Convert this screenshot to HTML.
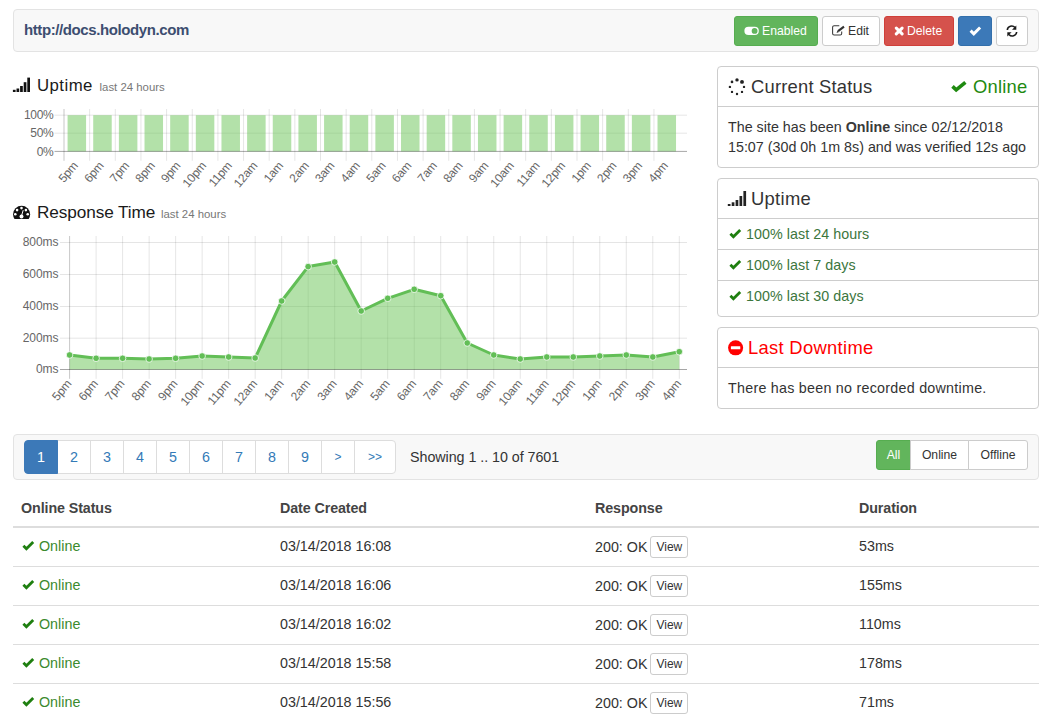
<!DOCTYPE html>
<html><head><meta charset="utf-8">
<style>
*{box-sizing:border-box;margin:0;padding:0}
html,body{width:1050px;height:722px;overflow:hidden;background:#fff}
body{font-family:"Liberation Sans",sans-serif;font-size:14.3px;color:#333;position:relative}
.abs{position:absolute}
svg{display:block}
.well{position:absolute;background:#f8f8f8;border:1px solid #e3e3e3;border-radius:4px}
.btn{position:absolute;top:16px;height:30px;border:1px solid;border-radius:3px;font-size:12.2px;line-height:28px;white-space:nowrap}
.btn svg,.btn span{position:absolute}
.btn span{top:0}
.panel{position:absolute;left:717px;width:322px;border:1px solid #cdcdcd;border-radius:4px;background:#fff}
.ph{position:relative;height:40px;border-bottom:1px solid #cdcdcd;font-size:18.4px;color:#333}
.ph span.t{position:absolute;top:9px;line-height:22px;white-space:nowrap}
.ph svg{position:absolute}
.li{position:relative;height:31px;border-bottom:1px solid #cdcdcd;color:#3c763d}
.li:last-child{border-bottom:none}
.li span{position:absolute;left:28px;top:6px;line-height:18px;white-space:nowrap;letter-spacing:0.05px}
.li svg{position:absolute;left:11px;top:10px}
.pg{position:absolute;top:440px;height:34px;border:1px solid #ddd;color:#337ab7;font-size:14.3px;line-height:32px;text-align:center;background:#fff}
.row{position:absolute;left:13px;width:1026px;height:39px;border-top:1px solid #ddd}
.row div{position:absolute;top:9px;line-height:18px;color:#333;white-space:nowrap}
.row svg{position:absolute;left:9px;top:13px}
.view{display:inline-block;position:relative;top:-1px;margin-left:3px;height:22px;padding:0 5px;border:1px solid #ccc;border-radius:3px;font-size:12px;line-height:20px;background:#fff;color:#333}
th{font-weight:700}
</style></head><body>
<div class="well" style="left:13px;top:9px;width:1026px;height:43px"></div>
<div class="abs" style="left:24px;top:20px;font-size:15px;font-weight:700;color:#3d4e70;line-height:20px;letter-spacing:-0.4px">http://docs.holodyn.com</div>
<div class="btn" style="left:734px;width:84px;background:#62b55c;border-color:#56ad50;color:#fff">
  <svg width="16" height="10" viewBox="0 0 16 10" style="left:9px;top:9px"><rect x="0.4" y="0.8" width="14.4" height="8.2" rx="4.1" fill="#fff"/><circle cx="10.6" cy="4.9" r="2.9" fill="#62b55c"/></svg>
  <span style="left:27px">Enabled</span></div>
<div class="btn" style="left:822px;width:58px;background:#fff;border-color:#ccc;color:#333">
  <svg width="16" height="14" viewBox="0 0 16 14" style="left:8px;top:7px"><path d="M8.3 1.7H3.1a1.5 1.5 0 0 0-1.5 1.5v6.3a1.5 1.5 0 0 0 1.5 1.5h6.1a1.5 1.5 0 0 0 1.5-1.5V7.6" fill="none" stroke="#3a3a3a" stroke-width="1.05"/><path d="M7.1 7.2L13 2.6" stroke="#333" stroke-width="2.1"/><path d="M5.6 8.9l.8-2.4 1.6 1.6z" fill="#333"/></svg>
  <span style="left:25px">Edit</span></div>
<div class="btn" style="left:884px;width:70px;background:#d5524c;border-color:#cf3f39;color:#fff">
  <svg width="12" height="11" viewBox="0 0 12 11" style="left:9px;top:9px"><path d="M2.3 2.1L8.1 7.9M8.1 2.1L2.3 7.9" stroke="#fff" stroke-width="3" stroke-linecap="round"/></svg>
  <span style="left:22px">Delete</span></div>
<div class="btn" style="left:958px;width:34px;background:#3c79b8;border-color:#336fab;color:#fff">
  <svg width="14" height="11" viewBox="0 0 14 11" style="left:10px;top:9px"><path d="M1.6 4.6l3.2 3.2 6.3-6.3" fill="none" stroke="#fff" stroke-width="3"/></svg></div>
<div class="btn" style="left:996px;width:32px;background:#fff;border-color:#ccc;color:#333">
  <svg width="12" height="12" viewBox="0 0 12 12" style="left:9px;top:7.8px"><path d="M1.3 5A4.4 4.4 0 0 1 9 2.6" fill="none" stroke="#1a1a1a" stroke-width="1.6"/><path d="M10.3 0.4v4.4H6z" fill="#1a1a1a"/><path d="M10.7 7A4.4 4.4 0 0 1 3 9.4" fill="none" stroke="#1a1a1a" stroke-width="1.6"/><path d="M1.3 11.6V7.2h4.3z" fill="#1a1a1a"/></svg></div>

<div class="panel" style="top:66px;height:102px">
  <div class="ph"><svg width="20" height="20" viewBox="0 0 20 20" style="left:9px;top:9.8px"><g fill="#222"><circle cx="10" cy="2.9" r="1.7"/><circle cx="15" cy="4.9" r="1.95"/><circle cx="17" cy="9.9" r="1.2"/><circle cx="15" cy="14.9" r="1.2"/><circle cx="10" cy="17" r="1.2"/><circle cx="5" cy="14.9" r="1.2"/><circle cx="2.9" cy="9.9" r="1.2"/><circle cx="5" cy="4.9" r="1.35"/></g></svg>
    <span class="t" style="left:33px;letter-spacing:0.2px">Current Status</span>
    <svg width="18" height="14" viewBox="0 0 18 14" style="left:232px;top:13px"><path d="M2.5 6.4L6.2 9.9L15.4 2.3" fill="none" stroke="#1f8a10" stroke-width="3.6"/></svg>
    <span class="t" style="left:255px;color:#1f8a10;letter-spacing:0.2px">Online</span>
  </div>
  <div class="abs" style="left:10px;top:50px;line-height:20px;width:312px;white-space:nowrap">The site has been <b style="color:#3a3a3a">Online</b> since 02/12/2018<br>15:07 (30d 0h 1m 8s) and was verified 12s ago</div>
</div>
<div class="panel" style="top:178px;height:139px">
  <div class="ph">
    <svg width="26" height="18" viewBox="722 190 26 18" style="left:4px;top:11px;width:26px;height:18px"><g fill="#222"><rect x="727.80" y="204.00" width="2.7" height="2"/><rect x="731.70" y="202.30" width="2.7" height="3.7"/><rect x="735.60" y="200.00" width="2.7" height="6"/><rect x="739.50" y="196.00" width="2.7" height="10"/><rect x="743.40" y="191.00" width="2.7" height="15"/></g></svg>
    <span class="t" style="left:33px;letter-spacing:0.3px">Uptime</span>
  </div>
  <div class="li"><svg width="13" height="11" viewBox="0 0 13 11"><path d="M1.4 4.8L4.4 7.8L11.2 1" fill="none" stroke="#1f7f10" stroke-width="2.8"/></svg><span>100% last 24 hours</span></div>
  <div class="li"><svg width="13" height="11" viewBox="0 0 13 11"><path d="M1.4 4.8L4.4 7.8L11.2 1" fill="none" stroke="#1f7f10" stroke-width="2.8"/></svg><span>100% last 7 days</span></div>
  <div class="li"><svg width="13" height="11" viewBox="0 0 13 11"><path d="M1.4 4.8L4.4 7.8L11.2 1" fill="none" stroke="#1f7f10" stroke-width="2.8"/></svg><span>100% last 30 days</span></div>
</div>
<div class="panel" style="top:327px;height:82px">
  <div class="ph">
    <svg width="17" height="17" viewBox="0 0 17 17" style="left:10px;top:12px"><circle cx="7.6" cy="7.8" r="7.55" fill="#f00"/><rect x="2.9" y="6.3" width="9.4" height="3" rx=".4" fill="#fff"/></svg>
    <span class="t" style="left:30px;color:#f00;letter-spacing:0.3px">Last Downtime</span>
  </div>
  <div class="abs" style="left:10px;top:50px;line-height:20px;white-space:nowrap;letter-spacing:0.25px">There has been no recorded downtime.</div>
</div>

<svg class="abs" style="left:10px;top:75px" width="24" height="20" viewBox="10 75 24 20"><g fill="#111"><rect x="12.90" y="89.80" width="2.7" height="2.2"/><rect x="16.50" y="88.50" width="2.7" height="3.5"/><rect x="20.10" y="86.00" width="2.7" height="6"/><rect x="23.70" y="82.20" width="2.7" height="9.8"/><rect x="27.30" y="77.60" width="2.7" height="14.4"/></g></svg>
<div class="abs" style="left:37px;top:75px;font-size:16.8px;line-height:22px;color:#1a1a1a;white-space:nowrap"><span style="letter-spacing:0.45px">Uptime</span> <span style="font-size:11.4px;color:#777;margin-left:2px">last 24 hours</span></div>
<svg class="abs" style="left:10px;top:200px" width="24" height="24" viewBox="10 200 24 24"><defs><clipPath id="cl"><rect x="10" y="200" width="24" height="19"/></clipPath></defs><circle cx="21.6" cy="214.3" r="8.5" fill="#111" clip-path="url(#cl)"/><g fill="#fff"><circle cx="17.1" cy="210.1" r="1.3"/><circle cx="21.5" cy="208.1" r="1.3"/><circle cx="25.9" cy="210.1" r="1.3"/><circle cx="15.3" cy="214.3" r="1.3"/><circle cx="27.7" cy="214.3" r="1.3"/><circle cx="21.5" cy="216.4" r="2"/></g><path d="M21.5 216l1.7-5.8" stroke="#fff" stroke-width="1"/></svg>
<div class="abs" style="left:37px;top:201px;font-size:17.2px;line-height:22px;color:#1a1a1a;white-space:nowrap"><span style="letter-spacing:-0.1px">Response Time</span> <span style="font-size:11.4px;color:#777;margin-left:1px">last 24 hours</span></div>

<svg class="abs" style="left:0;top:100px" width="700" height="95" viewBox="0 100 700 95" font-family="Liberation Sans">
<line x1="54.5" y1="115.2" x2="687" y2="115.2" stroke="rgba(0,0,0,0.1)"/>
<line x1="54.5" y1="133.2" x2="687" y2="133.2" stroke="rgba(0,0,0,0.1)"/>
<line x1="89.65" y1="109" x2="89.65" y2="160.8" stroke="rgba(0,0,0,0.1)"/>
<line x1="115.30" y1="109" x2="115.30" y2="160.8" stroke="rgba(0,0,0,0.1)"/>
<line x1="140.95" y1="109" x2="140.95" y2="160.8" stroke="rgba(0,0,0,0.1)"/>
<line x1="166.60" y1="109" x2="166.60" y2="160.8" stroke="rgba(0,0,0,0.1)"/>
<line x1="192.25" y1="109" x2="192.25" y2="160.8" stroke="rgba(0,0,0,0.1)"/>
<line x1="217.90" y1="109" x2="217.90" y2="160.8" stroke="rgba(0,0,0,0.1)"/>
<line x1="243.55" y1="109" x2="243.55" y2="160.8" stroke="rgba(0,0,0,0.1)"/>
<line x1="269.20" y1="109" x2="269.20" y2="160.8" stroke="rgba(0,0,0,0.1)"/>
<line x1="294.85" y1="109" x2="294.85" y2="160.8" stroke="rgba(0,0,0,0.1)"/>
<line x1="320.50" y1="109" x2="320.50" y2="160.8" stroke="rgba(0,0,0,0.1)"/>
<line x1="346.15" y1="109" x2="346.15" y2="160.8" stroke="rgba(0,0,0,0.1)"/>
<line x1="371.80" y1="109" x2="371.80" y2="160.8" stroke="rgba(0,0,0,0.1)"/>
<line x1="397.45" y1="109" x2="397.45" y2="160.8" stroke="rgba(0,0,0,0.1)"/>
<line x1="423.10" y1="109" x2="423.10" y2="160.8" stroke="rgba(0,0,0,0.1)"/>
<line x1="448.75" y1="109" x2="448.75" y2="160.8" stroke="rgba(0,0,0,0.1)"/>
<line x1="474.40" y1="109" x2="474.40" y2="160.8" stroke="rgba(0,0,0,0.1)"/>
<line x1="500.05" y1="109" x2="500.05" y2="160.8" stroke="rgba(0,0,0,0.1)"/>
<line x1="525.70" y1="109" x2="525.70" y2="160.8" stroke="rgba(0,0,0,0.1)"/>
<line x1="551.35" y1="109" x2="551.35" y2="160.8" stroke="rgba(0,0,0,0.1)"/>
<line x1="577.00" y1="109" x2="577.00" y2="160.8" stroke="rgba(0,0,0,0.1)"/>
<line x1="602.65" y1="109" x2="602.65" y2="160.8" stroke="rgba(0,0,0,0.1)"/>
<line x1="628.30" y1="109" x2="628.30" y2="160.8" stroke="rgba(0,0,0,0.1)"/>
<line x1="653.95" y1="109" x2="653.95" y2="160.8" stroke="rgba(0,0,0,0.1)"/>
<rect x="67.58" y="115.2" width="18.5" height="36.2" fill="rgba(104,196,84,0.5)"/>
<rect x="93.22" y="115.2" width="18.5" height="36.2" fill="rgba(104,196,84,0.5)"/>
<rect x="118.88" y="115.2" width="18.5" height="36.2" fill="rgba(104,196,84,0.5)"/>
<rect x="144.52" y="115.2" width="18.5" height="36.2" fill="rgba(104,196,84,0.5)"/>
<rect x="170.18" y="115.2" width="18.5" height="36.2" fill="rgba(104,196,84,0.5)"/>
<rect x="195.82" y="115.2" width="18.5" height="36.2" fill="rgba(104,196,84,0.5)"/>
<rect x="221.47" y="115.2" width="18.5" height="36.2" fill="rgba(104,196,84,0.5)"/>
<rect x="247.12" y="115.2" width="18.5" height="36.2" fill="rgba(104,196,84,0.5)"/>
<rect x="272.77" y="115.2" width="18.5" height="36.2" fill="rgba(104,196,84,0.5)"/>
<rect x="298.42" y="115.2" width="18.5" height="36.2" fill="rgba(104,196,84,0.5)"/>
<rect x="324.07" y="115.2" width="18.5" height="36.2" fill="rgba(104,196,84,0.5)"/>
<rect x="349.72" y="115.2" width="18.5" height="36.2" fill="rgba(104,196,84,0.5)"/>
<rect x="375.38" y="115.2" width="18.5" height="36.2" fill="rgba(104,196,84,0.5)"/>
<rect x="401.02" y="115.2" width="18.5" height="36.2" fill="rgba(104,196,84,0.5)"/>
<rect x="426.67" y="115.2" width="18.5" height="36.2" fill="rgba(104,196,84,0.5)"/>
<rect x="452.32" y="115.2" width="18.5" height="36.2" fill="rgba(104,196,84,0.5)"/>
<rect x="477.97" y="115.2" width="18.5" height="36.2" fill="rgba(104,196,84,0.5)"/>
<rect x="503.62" y="115.2" width="18.5" height="36.2" fill="rgba(104,196,84,0.5)"/>
<rect x="529.27" y="115.2" width="18.5" height="36.2" fill="rgba(104,196,84,0.5)"/>
<rect x="554.92" y="115.2" width="18.5" height="36.2" fill="rgba(104,196,84,0.5)"/>
<rect x="580.57" y="115.2" width="18.5" height="36.2" fill="rgba(104,196,84,0.5)"/>
<rect x="606.23" y="115.2" width="18.5" height="36.2" fill="rgba(104,196,84,0.5)"/>
<rect x="631.88" y="115.2" width="18.5" height="36.2" fill="rgba(104,196,84,0.5)"/>
<rect x="657.52" y="115.2" width="18.5" height="36.2" fill="rgba(104,196,84,0.5)"/>
<line x1="64.0" y1="109" x2="64.0" y2="160.8" stroke="rgba(0,0,0,0.22)"/>
<line x1="54.5" y1="151.4" x2="687" y2="151.4" stroke="rgba(0,0,0,0.35)"/>
<text x="53.3" y="119.3" text-anchor="end" font-size="12" letter-spacing="-0.35" fill="#666">100%</text>
<text x="53.3" y="137.3" text-anchor="end" font-size="12" letter-spacing="-0.35" fill="#666">50%</text>
<text x="53.3" y="155.5" text-anchor="end" font-size="12" letter-spacing="-0.35" fill="#666">0%</text>
<text transform="translate(75.5,163.3) rotate(-50)" text-anchor="end" font-size="12" letter-spacing="-0.2" fill="#666" dy="4">5pm</text>
<text transform="translate(101.2,163.3) rotate(-50)" text-anchor="end" font-size="12" letter-spacing="-0.2" fill="#666" dy="4">6pm</text>
<text transform="translate(126.8,163.3) rotate(-50)" text-anchor="end" font-size="12" letter-spacing="-0.2" fill="#666" dy="4">7pm</text>
<text transform="translate(152.4,163.3) rotate(-50)" text-anchor="end" font-size="12" letter-spacing="-0.2" fill="#666" dy="4">8pm</text>
<text transform="translate(178.1,163.3) rotate(-50)" text-anchor="end" font-size="12" letter-spacing="-0.2" fill="#666" dy="4">9pm</text>
<text transform="translate(203.8,163.3) rotate(-50)" text-anchor="end" font-size="12" letter-spacing="-0.2" fill="#666" dy="4">10pm</text>
<text transform="translate(229.4,163.3) rotate(-50)" text-anchor="end" font-size="12" letter-spacing="-0.2" fill="#666" dy="4">11pm</text>
<text transform="translate(255.0,163.3) rotate(-50)" text-anchor="end" font-size="12" letter-spacing="-0.2" fill="#666" dy="4">12am</text>
<text transform="translate(280.7,163.3) rotate(-50)" text-anchor="end" font-size="12" letter-spacing="-0.2" fill="#666" dy="4">1am</text>
<text transform="translate(306.4,163.3) rotate(-50)" text-anchor="end" font-size="12" letter-spacing="-0.2" fill="#666" dy="4">2am</text>
<text transform="translate(332.0,163.3) rotate(-50)" text-anchor="end" font-size="12" letter-spacing="-0.2" fill="#666" dy="4">3am</text>
<text transform="translate(357.6,163.3) rotate(-50)" text-anchor="end" font-size="12" letter-spacing="-0.2" fill="#666" dy="4">4am</text>
<text transform="translate(383.3,163.3) rotate(-50)" text-anchor="end" font-size="12" letter-spacing="-0.2" fill="#666" dy="4">5am</text>
<text transform="translate(408.9,163.3) rotate(-50)" text-anchor="end" font-size="12" letter-spacing="-0.2" fill="#666" dy="4">6am</text>
<text transform="translate(434.6,163.3) rotate(-50)" text-anchor="end" font-size="12" letter-spacing="-0.2" fill="#666" dy="4">7am</text>
<text transform="translate(460.2,163.3) rotate(-50)" text-anchor="end" font-size="12" letter-spacing="-0.2" fill="#666" dy="4">8am</text>
<text transform="translate(485.9,163.3) rotate(-50)" text-anchor="end" font-size="12" letter-spacing="-0.2" fill="#666" dy="4">9am</text>
<text transform="translate(511.5,163.3) rotate(-50)" text-anchor="end" font-size="12" letter-spacing="-0.2" fill="#666" dy="4">10am</text>
<text transform="translate(537.2,163.3) rotate(-50)" text-anchor="end" font-size="12" letter-spacing="-0.2" fill="#666" dy="4">11am</text>
<text transform="translate(562.8,163.3) rotate(-50)" text-anchor="end" font-size="12" letter-spacing="-0.2" fill="#666" dy="4">12pm</text>
<text transform="translate(588.5,163.3) rotate(-50)" text-anchor="end" font-size="12" letter-spacing="-0.2" fill="#666" dy="4">1pm</text>
<text transform="translate(614.1,163.3) rotate(-50)" text-anchor="end" font-size="12" letter-spacing="-0.2" fill="#666" dy="4">2pm</text>
<text transform="translate(639.8,163.3) rotate(-50)" text-anchor="end" font-size="12" letter-spacing="-0.2" fill="#666" dy="4">3pm</text>
<text transform="translate(665.4,163.3) rotate(-50)" text-anchor="end" font-size="12" letter-spacing="-0.2" fill="#666" dy="4">4pm</text>
</svg>
<svg class="abs" style="left:0;top:225px" width="700" height="185" viewBox="0 225 700 185" font-family="Liberation Sans">
<line x1="60" y1="242.5" x2="687" y2="242.5" stroke="rgba(0,0,0,0.1)"/>
<line x1="60" y1="274.5" x2="687" y2="274.5" stroke="rgba(0,0,0,0.1)"/>
<line x1="60" y1="306.5" x2="687" y2="306.5" stroke="rgba(0,0,0,0.1)"/>
<line x1="60" y1="338.2" x2="687" y2="338.2" stroke="rgba(0,0,0,0.1)"/>
<line x1="96.11" y1="236" x2="96.11" y2="378.8" stroke="rgba(0,0,0,0.1)"/>
<line x1="122.62" y1="236" x2="122.62" y2="378.8" stroke="rgba(0,0,0,0.1)"/>
<line x1="149.13" y1="236" x2="149.13" y2="378.8" stroke="rgba(0,0,0,0.1)"/>
<line x1="175.63" y1="236" x2="175.63" y2="378.8" stroke="rgba(0,0,0,0.1)"/>
<line x1="202.14" y1="236" x2="202.14" y2="378.8" stroke="rgba(0,0,0,0.1)"/>
<line x1="228.65" y1="236" x2="228.65" y2="378.8" stroke="rgba(0,0,0,0.1)"/>
<line x1="255.16" y1="236" x2="255.16" y2="378.8" stroke="rgba(0,0,0,0.1)"/>
<line x1="281.67" y1="236" x2="281.67" y2="378.8" stroke="rgba(0,0,0,0.1)"/>
<line x1="308.18" y1="236" x2="308.18" y2="378.8" stroke="rgba(0,0,0,0.1)"/>
<line x1="334.69" y1="236" x2="334.69" y2="378.8" stroke="rgba(0,0,0,0.1)"/>
<line x1="361.20" y1="236" x2="361.20" y2="378.8" stroke="rgba(0,0,0,0.1)"/>
<line x1="387.70" y1="236" x2="387.70" y2="378.8" stroke="rgba(0,0,0,0.1)"/>
<line x1="414.21" y1="236" x2="414.21" y2="378.8" stroke="rgba(0,0,0,0.1)"/>
<line x1="440.72" y1="236" x2="440.72" y2="378.8" stroke="rgba(0,0,0,0.1)"/>
<line x1="467.23" y1="236" x2="467.23" y2="378.8" stroke="rgba(0,0,0,0.1)"/>
<line x1="493.74" y1="236" x2="493.74" y2="378.8" stroke="rgba(0,0,0,0.1)"/>
<line x1="520.25" y1="236" x2="520.25" y2="378.8" stroke="rgba(0,0,0,0.1)"/>
<line x1="546.76" y1="236" x2="546.76" y2="378.8" stroke="rgba(0,0,0,0.1)"/>
<line x1="573.27" y1="236" x2="573.27" y2="378.8" stroke="rgba(0,0,0,0.1)"/>
<line x1="599.77" y1="236" x2="599.77" y2="378.8" stroke="rgba(0,0,0,0.1)"/>
<line x1="626.28" y1="236" x2="626.28" y2="378.8" stroke="rgba(0,0,0,0.1)"/>
<line x1="652.79" y1="236" x2="652.79" y2="378.8" stroke="rgba(0,0,0,0.1)"/>
<line x1="679.30" y1="236" x2="679.30" y2="378.8" stroke="rgba(0,0,0,0.1)"/>
<polygon points="69.60,369.5 69.60,355.00 96.11,358.30 122.62,358.30 149.13,359.00 175.63,358.30 202.14,356.00 228.65,357.00 255.16,358.00 281.67,301.00 308.18,266.60 334.69,262.00 361.20,311.00 387.70,298.30 414.21,289.30 440.72,295.70 467.23,343.00 493.74,355.00 520.25,359.00 546.76,357.00 573.27,357.00 599.77,356.00 626.28,355.00 652.79,357.00 679.30,351.70 679.30,369.5" fill="rgba(104,196,84,0.5)"/>
<line x1="69.6" y1="236" x2="69.6" y2="378.8" stroke="rgba(0,0,0,0.22)"/>
<line x1="60" y1="369.5" x2="687" y2="369.5" stroke="rgba(0,0,0,0.35)"/>
<text x="58.3" y="246.1" text-anchor="end" font-size="12" letter-spacing="-0.1" fill="#666">800ms</text>
<text x="58.3" y="278.1" text-anchor="end" font-size="12" letter-spacing="-0.1" fill="#666">600ms</text>
<text x="58.3" y="310.1" text-anchor="end" font-size="12" letter-spacing="-0.1" fill="#666">400ms</text>
<text x="58.3" y="341.8" text-anchor="end" font-size="12" letter-spacing="-0.1" fill="#666">200ms</text>
<text x="58.3" y="373.1" text-anchor="end" font-size="12" letter-spacing="-0.1" fill="#666">0ms</text>
<polyline points="69.60,355.00 96.11,358.30 122.62,358.30 149.13,359.00 175.63,358.30 202.14,356.00 228.65,357.00 255.16,358.00 281.67,301.00 308.18,266.60 334.69,262.00 361.20,311.00 387.70,298.30 414.21,289.30 440.72,295.70 467.23,343.00 493.74,355.00 520.25,359.00 546.76,357.00 573.27,357.00 599.77,356.00 626.28,355.00 652.79,357.00 679.30,351.70" fill="none" stroke="#62be56" stroke-width="3" stroke-linejoin="round"/>
<circle cx="69.60" cy="355.00" r="3.3" fill="#62be56" stroke="rgba(255,255,255,0.75)" stroke-width="1"/>
<circle cx="96.11" cy="358.30" r="3.3" fill="#62be56" stroke="rgba(255,255,255,0.75)" stroke-width="1"/>
<circle cx="122.62" cy="358.30" r="3.3" fill="#62be56" stroke="rgba(255,255,255,0.75)" stroke-width="1"/>
<circle cx="149.13" cy="359.00" r="3.3" fill="#62be56" stroke="rgba(255,255,255,0.75)" stroke-width="1"/>
<circle cx="175.63" cy="358.30" r="3.3" fill="#62be56" stroke="rgba(255,255,255,0.75)" stroke-width="1"/>
<circle cx="202.14" cy="356.00" r="3.3" fill="#62be56" stroke="rgba(255,255,255,0.75)" stroke-width="1"/>
<circle cx="228.65" cy="357.00" r="3.3" fill="#62be56" stroke="rgba(255,255,255,0.75)" stroke-width="1"/>
<circle cx="255.16" cy="358.00" r="3.3" fill="#62be56" stroke="rgba(255,255,255,0.75)" stroke-width="1"/>
<circle cx="281.67" cy="301.00" r="3.3" fill="#62be56" stroke="rgba(255,255,255,0.75)" stroke-width="1"/>
<circle cx="308.18" cy="266.60" r="3.3" fill="#62be56" stroke="rgba(255,255,255,0.75)" stroke-width="1"/>
<circle cx="334.69" cy="262.00" r="3.3" fill="#62be56" stroke="rgba(255,255,255,0.75)" stroke-width="1"/>
<circle cx="361.20" cy="311.00" r="3.3" fill="#62be56" stroke="rgba(255,255,255,0.75)" stroke-width="1"/>
<circle cx="387.70" cy="298.30" r="3.3" fill="#62be56" stroke="rgba(255,255,255,0.75)" stroke-width="1"/>
<circle cx="414.21" cy="289.30" r="3.3" fill="#62be56" stroke="rgba(255,255,255,0.75)" stroke-width="1"/>
<circle cx="440.72" cy="295.70" r="3.3" fill="#62be56" stroke="rgba(255,255,255,0.75)" stroke-width="1"/>
<circle cx="467.23" cy="343.00" r="3.3" fill="#62be56" stroke="rgba(255,255,255,0.75)" stroke-width="1"/>
<circle cx="493.74" cy="355.00" r="3.3" fill="#62be56" stroke="rgba(255,255,255,0.75)" stroke-width="1"/>
<circle cx="520.25" cy="359.00" r="3.3" fill="#62be56" stroke="rgba(255,255,255,0.75)" stroke-width="1"/>
<circle cx="546.76" cy="357.00" r="3.3" fill="#62be56" stroke="rgba(255,255,255,0.75)" stroke-width="1"/>
<circle cx="573.27" cy="357.00" r="3.3" fill="#62be56" stroke="rgba(255,255,255,0.75)" stroke-width="1"/>
<circle cx="599.77" cy="356.00" r="3.3" fill="#62be56" stroke="rgba(255,255,255,0.75)" stroke-width="1"/>
<circle cx="626.28" cy="355.00" r="3.3" fill="#62be56" stroke="rgba(255,255,255,0.75)" stroke-width="1"/>
<circle cx="652.79" cy="357.00" r="3.3" fill="#62be56" stroke="rgba(255,255,255,0.75)" stroke-width="1"/>
<circle cx="679.30" cy="351.70" r="3.3" fill="#62be56" stroke="rgba(255,255,255,0.75)" stroke-width="1"/>
<text transform="translate(69.1,381.5) rotate(-50)" text-anchor="end" font-size="12" letter-spacing="-0.2" fill="#666" dy="4">5pm</text>
<text transform="translate(95.6,381.5) rotate(-50)" text-anchor="end" font-size="12" letter-spacing="-0.2" fill="#666" dy="4">6pm</text>
<text transform="translate(122.1,381.5) rotate(-50)" text-anchor="end" font-size="12" letter-spacing="-0.2" fill="#666" dy="4">7pm</text>
<text transform="translate(148.6,381.5) rotate(-50)" text-anchor="end" font-size="12" letter-spacing="-0.2" fill="#666" dy="4">8pm</text>
<text transform="translate(175.1,381.5) rotate(-50)" text-anchor="end" font-size="12" letter-spacing="-0.2" fill="#666" dy="4">9pm</text>
<text transform="translate(201.6,381.5) rotate(-50)" text-anchor="end" font-size="12" letter-spacing="-0.2" fill="#666" dy="4">10pm</text>
<text transform="translate(228.2,381.5) rotate(-50)" text-anchor="end" font-size="12" letter-spacing="-0.2" fill="#666" dy="4">11pm</text>
<text transform="translate(254.7,381.5) rotate(-50)" text-anchor="end" font-size="12" letter-spacing="-0.2" fill="#666" dy="4">12am</text>
<text transform="translate(281.2,381.5) rotate(-50)" text-anchor="end" font-size="12" letter-spacing="-0.2" fill="#666" dy="4">1am</text>
<text transform="translate(307.7,381.5) rotate(-50)" text-anchor="end" font-size="12" letter-spacing="-0.2" fill="#666" dy="4">2am</text>
<text transform="translate(334.2,381.5) rotate(-50)" text-anchor="end" font-size="12" letter-spacing="-0.2" fill="#666" dy="4">3am</text>
<text transform="translate(360.7,381.5) rotate(-50)" text-anchor="end" font-size="12" letter-spacing="-0.2" fill="#666" dy="4">4am</text>
<text transform="translate(387.2,381.5) rotate(-50)" text-anchor="end" font-size="12" letter-spacing="-0.2" fill="#666" dy="4">5am</text>
<text transform="translate(413.7,381.5) rotate(-50)" text-anchor="end" font-size="12" letter-spacing="-0.2" fill="#666" dy="4">6am</text>
<text transform="translate(440.2,381.5) rotate(-50)" text-anchor="end" font-size="12" letter-spacing="-0.2" fill="#666" dy="4">7am</text>
<text transform="translate(466.7,381.5) rotate(-50)" text-anchor="end" font-size="12" letter-spacing="-0.2" fill="#666" dy="4">8am</text>
<text transform="translate(493.2,381.5) rotate(-50)" text-anchor="end" font-size="12" letter-spacing="-0.2" fill="#666" dy="4">9am</text>
<text transform="translate(519.7,381.5) rotate(-50)" text-anchor="end" font-size="12" letter-spacing="-0.2" fill="#666" dy="4">10am</text>
<text transform="translate(546.3,381.5) rotate(-50)" text-anchor="end" font-size="12" letter-spacing="-0.2" fill="#666" dy="4">11am</text>
<text transform="translate(572.8,381.5) rotate(-50)" text-anchor="end" font-size="12" letter-spacing="-0.2" fill="#666" dy="4">12pm</text>
<text transform="translate(599.3,381.5) rotate(-50)" text-anchor="end" font-size="12" letter-spacing="-0.2" fill="#666" dy="4">1pm</text>
<text transform="translate(625.8,381.5) rotate(-50)" text-anchor="end" font-size="12" letter-spacing="-0.2" fill="#666" dy="4">2pm</text>
<text transform="translate(652.3,381.5) rotate(-50)" text-anchor="end" font-size="12" letter-spacing="-0.2" fill="#666" dy="4">3pm</text>
<text transform="translate(678.8,381.5) rotate(-50)" text-anchor="end" font-size="12" letter-spacing="-0.2" fill="#666" dy="4">4pm</text>
</svg>
<div class="well" style="left:13px;top:434px;width:1026px;height:46px"></div>
<div class="pg" style="left:24px;width:34px;z-index:2;background:#3c79b8;border-color:#3c79b8;color:#fff;border-radius:4px 0 0 4px">1</div>
<div class="pg" style="left:57px;width:34px">2</div>
<div class="pg" style="left:90px;width:34px">3</div>
<div class="pg" style="left:123px;width:34px">4</div>
<div class="pg" style="left:156px;width:34px">5</div>
<div class="pg" style="left:189px;width:34px">6</div>
<div class="pg" style="left:222px;width:34px">7</div>
<div class="pg" style="left:255px;width:34px">8</div>
<div class="pg" style="left:288px;width:34px">9</div>
<div class="pg" style="left:321px;width:34px;font-size:12px">&gt;</div>
<div class="pg" style="left:354px;width:42px;border-radius:0 4px 4px 0;font-size:12px">&gt;&gt;</div>
<div class="abs" style="left:410px;top:447px;line-height:20px;letter-spacing:-0.05px;white-space:nowrap">Showing 1 .. 10 of 7601</div>
<div class="abs" style="left:876px;top:440px;width:152px;height:30px;font-size:12.2px;line-height:28px">
  <div class="abs" style="left:0;top:0;width:35px;height:30px;background:#62b55c;border:1px solid #56ad50;border-radius:3px 0 0 3px;color:#fff;text-align:center">All</div>
  <div class="abs" style="left:34px;top:0;width:59px;height:30px;background:#fff;border:1px solid #ccc;text-align:center">Online</div>
  <div class="abs" style="left:92px;top:0;width:60px;height:30px;background:#fff;border:1px solid #ccc;border-radius:0 3px 3px 0;text-align:center">Offline</div>
</div>

<div class="abs" style="left:21px;top:498px;font-weight:700;line-height:20px;letter-spacing:-0.1px;white-space:nowrap;color:#444">Online Status</div>
<div class="abs" style="left:280px;top:498px;font-weight:700;line-height:20px;letter-spacing:-0.1px;white-space:nowrap;color:#444">Date Created</div>
<div class="abs" style="left:595px;top:498px;font-weight:700;line-height:20px;letter-spacing:-0.1px;white-space:nowrap;color:#444">Response</div>
<div class="abs" style="left:859px;top:498px;font-weight:700;line-height:20px;letter-spacing:-0.1px;white-space:nowrap;color:#444">Duration</div>
<div class="abs" style="left:13px;top:526px;width:1026px;height:2px;background:#ddd"></div>
<div class="row" style="top:527px"><svg width="13" height="11" viewBox="0 0 13 11"><path d="M1.4 4.8L4.4 7.8L11.2 1" fill="none" stroke="#1f7f10" stroke-width="2.8"/></svg>
  <div style="left:26px;color:#3c8a2e">Online</div>
  <div style="left:267px">03/14/2018 16:08</div>
  <div style="left:582px">200: OK<span class="view">View</span></div>
  <div style="left:846px">53ms</div>
</div>
<div class="row" style="top:566px"><svg width="13" height="11" viewBox="0 0 13 11"><path d="M1.4 4.8L4.4 7.8L11.2 1" fill="none" stroke="#1f7f10" stroke-width="2.8"/></svg>
  <div style="left:26px;color:#3c8a2e">Online</div>
  <div style="left:267px">03/14/2018 16:06</div>
  <div style="left:582px">200: OK<span class="view">View</span></div>
  <div style="left:846px">155ms</div>
</div>
<div class="row" style="top:605px"><svg width="13" height="11" viewBox="0 0 13 11"><path d="M1.4 4.8L4.4 7.8L11.2 1" fill="none" stroke="#1f7f10" stroke-width="2.8"/></svg>
  <div style="left:26px;color:#3c8a2e">Online</div>
  <div style="left:267px">03/14/2018 16:02</div>
  <div style="left:582px">200: OK<span class="view">View</span></div>
  <div style="left:846px">110ms</div>
</div>
<div class="row" style="top:644px"><svg width="13" height="11" viewBox="0 0 13 11"><path d="M1.4 4.8L4.4 7.8L11.2 1" fill="none" stroke="#1f7f10" stroke-width="2.8"/></svg>
  <div style="left:26px;color:#3c8a2e">Online</div>
  <div style="left:267px">03/14/2018 15:58</div>
  <div style="left:582px">200: OK<span class="view">View</span></div>
  <div style="left:846px">178ms</div>
</div>
<div class="row" style="top:683px"><svg width="13" height="11" viewBox="0 0 13 11"><path d="M1.4 4.8L4.4 7.8L11.2 1" fill="none" stroke="#1f7f10" stroke-width="2.8"/></svg>
  <div style="left:26px;color:#3c8a2e">Online</div>
  <div style="left:267px">03/14/2018 15:56</div>
  <div style="left:582px">200: OK<span class="view">View</span></div>
  <div style="left:846px">71ms</div>
</div>
</body></html>
